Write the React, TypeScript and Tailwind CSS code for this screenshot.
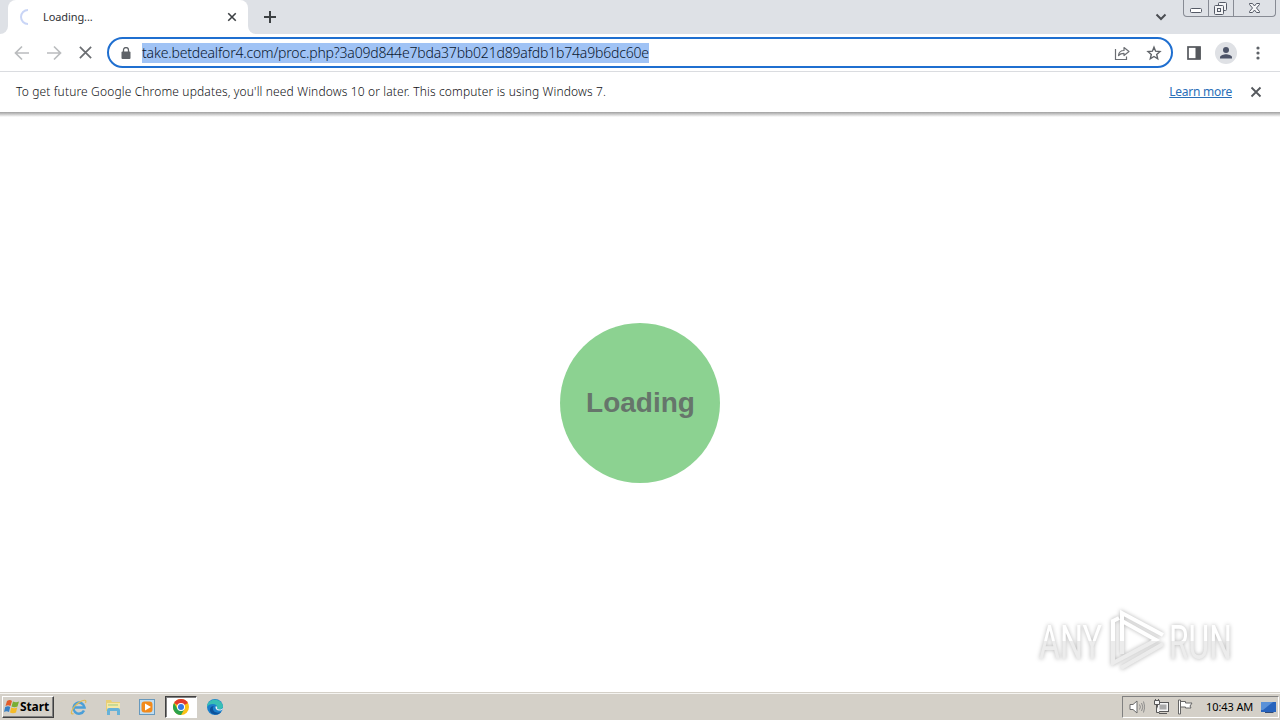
import type { ReactNode } from 'react';

const CloseIcon = ({ className }: { className: string }) => (
  <svg className={className} viewBox="0 0 12 12" fill="none" stroke="currentColor">
    <path d="M1.5 1.5l9 9M10.5 1.5l-9 9" />
  </svg>
);

const WindowButtons = () => (
  <div className="flex w-[93px] h-[17px] border border-t-0 border-[#878b94] rounded-b-[4px] text-[#555a66]">
    <div className="w-[25px] border-r border-[#878b94]">
      <svg className="w-6 h-4" viewBox="0 0 24 16" fill="#fff" stroke="currentColor">
        <rect x="6.5" y="8.5" width="11" height="4" rx="1" />
      </svg>
    </div>
    <div className="w-[25px] border-r border-[#878b94]">
      <svg className="w-6 h-4" viewBox="0 0 24 16" fill="#f3f4f6" stroke="currentColor">
        <rect x="9.5" y="2.5" width="8" height="8" rx="1" />
        <rect x="5.5" y="5.5" width="9" height="9" rx="1" />
        <rect x="8.5" y="8.5" width="3" height="3" />
      </svg>
    </div>
    <svg className="w-[41px] h-4" viewBox="0 0 41 16" fill="#f5f6f8" stroke="currentColor">
      <path d="M15.5 3.5h3l2 2.5 2-2.5h3v1l-3 3.5 3 3.5v1h-3l-2-2.5-2 2.5h-3v-1l3-3.5-3-3.5z" />
    </svg>
  </div>
);

const TabStrip = () => (
  <div className="flex h-[34px] bg-[#dee1e6]">
    <div className="flex items-end w-2">
      <div className="w-2 h-2 bg-white">
        <div className="w-2 h-2 bg-[#dee1e6] rounded-br-lg" />
      </div>
    </div>
    <div className="flex items-center w-60 h-[34px] pl-3 pr-[11px] bg-white rounded-t-lg">
      <svg className="w-4 h-4" viewBox="0 0 16 16" fill="none" stroke="#c9d5f6" strokeWidth="2">
        <path d="M8 1a7 7 0 0 0 0 14" />
      </svg>
      <span className="ml-[7px] text-[11px] leading-4 tracking-[-0.1px] text-[#303236]">Loading...</span>
      <CloseIcon className="w-[10px] h-[10px] ml-auto stroke-[1.9] text-[#3c4043]" />
    </div>
    <div className="flex items-end w-2">
      <div className="w-2 h-2 bg-white">
        <div className="w-2 h-2 bg-[#dee1e6] rounded-bl-lg" />
      </div>
    </div>
    <svg className="w-3 h-3 ml-2 mt-[11px]" viewBox="0 0 12 12" stroke="#3c4043" strokeWidth="2">
      <path d="M6 0v12M0 6h12" />
    </svg>
    <svg className="w-3 h-3 ml-auto mt-[11px] mr-4" viewBox="0 0 12 12" fill="none" stroke="#4a4d52" strokeWidth="2">
      <path d="M1.5 3.5L6 8l4.5-4.5" />
    </svg>
    <WindowButtons />
    <div className="w-1" />
  </div>
);

const Toolbar = () => (
  <div className="flex items-center h-[38px] border-b border-[#dadce0] bg-white">
    <svg className="w-4 h-4 ml-[14px]" viewBox="0 0 16 16" fill="none" stroke="#babcbe" strokeWidth="1.7">
      <path d="M15 8H2M8 1.5L1.5 8 8 14.5" />
    </svg>
    <svg className="w-4 h-4 ml-4" viewBox="0 0 16 16" fill="none" stroke="#babcbe" strokeWidth="1.7">
      <path d="M1 8h13M8 1.5L14.5 8 8 14.5" />
    </svg>
    <CloseIcon className="w-[15px] h-[15px] ml-[16px] stroke-[1.4] text-[#6b6e72]" />
    <div className="flex items-center w-[1066px] h-[31px] ml-[14px] border-2 border-[#1f6fd0] rounded-full bg-white">
      <svg className="w-[10px] h-3 ml-3" viewBox="0 0 10 12">
        <rect x="0.5" y="4.5" width="9" height="7.5" rx="1" fill="#5f6368" />
        <path d="M2.5 5V3a2.5 2.5 0 0 1 5 0v2" fill="none" stroke="#5f6368" strokeWidth="1.3" />
      </svg>
      <span className="w-[507px] h-5 ml-[11px] bg-[#a0c3f5] text-[14px] leading-5 font-light whitespace-nowrap tracking-[-0.18px] text-[#0a1830]">
        take.betdealfor4.com/proc.php?3a09d844e7bda37bb021d89afdb1b74a9b6dc60e
      </span>
      <svg className="w-4 h-4 ml-auto" viewBox="0 0 16 16" fill="none" stroke="#6b6e73" strokeWidth="1.2">
        <path d="M1.5 4v10.5h11v-3" />
        <path d="M4.5 10.5c.4-3.500 2.500-5 5.500-5V2.500l5 4-5 4V8.300c-2.500 0-4 .4-5.500 2.200z" strokeLinejoin="round" />
      </svg>
      <svg className="w-4 h-4 ml-4 mr-[9px]" viewBox="0 0 16 16" fill="none" stroke="#5f6368" strokeWidth="1.4">
        <path d="M8 2.200l1.600 4 4.400.4-3.300 2.900 1 4.300L8 11.500l-3.700 2.300 1-4.300L2 6.600l4.400-.4z" />
      </svg>
    </div>
    <svg className="w-[14px] h-[14px] ml-[14px]" viewBox="0 0 14 14">
      <rect x="1" y="1" width="12" height="12" fill="none" stroke="#55585d" strokeWidth="1.7" />
      <rect x="8.5" y="1" width="5" height="12" fill="#55585d" />
    </svg>
    <svg className="w-[22px] h-[22px] ml-[14px]" viewBox="0 0 22 22" fill="#4d5468">
      <circle cx="11" cy="11" r="11" fill="#dfe1e5" />
      <circle cx="11" cy="8" r="3" />
      <path d="M5 16.5v-1.3c0-2 4-3 6-3s6 1 6 3v1.3z" />
    </svg>
    <svg className="w-1 h-[14px] ml-[19px]" viewBox="0 0 4 14" fill="#5f6368">
      <circle cx="2" cy="2" r="1.6" />
      <circle cx="2" cy="7" r="1.6" />
      <circle cx="2" cy="12" r="1.6" />
    </svg>
  </div>
);

const InfoBar = () => (
  <>
    <div className="flex items-center h-10 pl-4 bg-white text-[12px]">
      <span className="whitespace-nowrap font-light tracking-[0.145px] text-[#101114]">
        To get future Google Chrome updates, you'll need Windows 10 or later. This computer is using Windows 7.
      </span>
      <span className="ml-auto whitespace-nowrap tracking-[-0.25px] underline text-[#2a6fb8]">Learn more</span>
      <CloseIcon className="w-3 h-3 ml-[18px] mr-[18px] stroke-[1.8] text-[#55585d]" />
    </div>
    <div className="h-[5px] bg-linear-to-b from-[#a0a0a0] to-white" />
  </>
);

const Watermark = () => (
  <svg className="w-[210px] h-[76px] mr-[38px] mb-[15px] overflow-visible drop-shadow-[0_0_2px_#b4b4b4]" viewBox="0 0 210 76">
    <defs>
      <linearGradient id="mark" x1="0" y1="0" x2="0" y2="76" gradientUnits="userSpaceOnUse">
        <stop offset="0.52" stopColor="#ffffff" />
        <stop offset="0.53" stopColor="#ececec" />
      </linearGradient>
    </defs>
    <g fill="url(#mark)" fontFamily="Roboto, sans-serif" fontSize="48">
      <text x="7" y="58" textLength="63" lengthAdjust="spacingAndGlyphs">ANY</text>
      <text x="137" y="58" textLength="63" lengthAdjust="spacingAndGlyphs">RUN</text>
    </g>
    <g fill="none" stroke="url(#mark)" strokeWidth="4">
      <path d="M87 17l-6 3v42l43-23-34-19" />
      <path d="M90 45V12l41 22" />
      <path d="M89 67l42-24M90 53v-8" />
    </g>
  </svg>
);

const IeIcon = () => (
  <svg className="w-[18px] h-[18px]" viewBox="0 0 18 18" fill="none">
    <path d="M14 12.5A5.5 5.5 0 1 1 14.5 9.500H5" stroke="#4b9fd8" strokeWidth="2.5" />
    <path d="M3.500 15.500C-1 18 2 9 9 4.500c5-3.200 8-3 6.500.5" stroke="#e0bb55" strokeWidth="1.2" />
  </svg>
);

const FolderIcon = () => (
  <svg className="w-[18px] h-[18px]" viewBox="0 0 18 18">
    <path d="M2 2h5l1 2h8v9H2z" fill="#e9cf75" />
    <path d="M3 5h13v7H3z" fill="#f6e8a6" />
    <path d="M3 17v-5q0-2 2-2h9q2 0 2 2v5h-3v-4H6v4z" fill="#66b2d9" />
    <path d="M4 7h10" stroke="#9acb83" />
  </svg>
);

const PlayerIcon = () => (
  <svg className="w-[18px] h-[18px]" viewBox="0 0 18 18">
    <rect x="1.5" y="1.5" width="15" height="15" fill="#c0ddf1" stroke="#6799bd" />
    <rect x="3.5" y="3.5" width="11" height="11" rx="3" fill="#f28a1b" />
    <path d="M7 5.5l6 3.5-6 3.5z" fill="#fff" />
  </svg>
);

const ChromeIcon = () => (
  <svg className="w-4 h-4" viewBox="0 0 16 16">
    <circle cx="8" cy="8" r="8" fill="#fbc116" />
    <path d="M8 8L1.070 4A8 8 0 0 1 14.930 4z" fill="#e33b2e" />
    <path d="M1.070 4A8 8 0 0 0 8 16l3.500-6L8 8 4.500 10z" fill="#2ba24c" />
    <circle cx="8" cy="8" r="4" fill="#fff" />
    <circle cx="8" cy="8" r="3" fill="#3578e5" />
  </svg>
);

const EdgeIcon = () => (
  <svg className="w-4 h-4" viewBox="0 0 16 16">
    <circle cx="8" cy="8" r="8" fill="#1b7fcb" />
    <path d="M0 8C0-1 14-2 16 7c.3 3-4 4.500-6 3 1-3-1-5-4-5-3 0-5 1-6 3z" fill="#38bfb5" />
    <path d="M6 8c-1 4 3 7 8 5-4 5-12 2-11-3 .4-2 2-3 4-3z" fill="#0d529b" />
    <path d="M9 7c-1.500 2 .5 5 3.500 4.500 2 0 3-.6 3.500-1.500l1-2c-2 3-5 2.800-7 2 .5-1 .5-2-1-3z" fill="#eef4f6" />
  </svg>
);

const TaskButton = ({ active = false, children }: { active?: boolean; children: ReactNode }) => (
  <div
    className={
      active
        ? 'flex items-center justify-center w-8 h-[22px] border border-t-[#404040] border-l-[#404040] border-r-white border-b-white bg-white shadow-[inset_1px_1px_#808080]'
        : 'flex items-center justify-center w-8 h-[22px]'
    }
  >
    {children}
  </div>
);

const Tray = () => (
  <div className="flex items-center w-[157px] h-[22px] ml-auto mt-[2px] mr-[1px] pl-[6px] border border-t-[#808080] border-l-[#808080] border-r-white border-b-white">
    <svg className="w-4 h-4" viewBox="0 0 16 16" fill="#fff" stroke="#6b6b6b">
      <path d="M1 5.5h3L8 2v12l-4-3.5H1z" />
      <path d="M10.500 5.500q1.800 2.500 0 5M12.500 4q2.800 4 0 8M14.500 2.500q2.500 5.500 0 11" fill="none" stroke="#858585" strokeWidth=".9" />
    </svg>
    <svg className="w-4 h-4 ml-2" viewBox="0 0 16 16" fill="#f5f5f5" stroke="#585858">
      <rect x="4.5" y="3.5" width="11" height="9" />
      <rect x="6.5" y="5.5" width="7" height="5" fill="#aaa" stroke="none" />
      <path d="M6 14.5h8M1.500 1.500h5v4h-5zM2.500 0v2M5.500 0v2M3.500 6v7.500h3" />
    </svg>
    <svg className="w-4 h-4 ml-2" viewBox="0 0 16 16" fill="#fff" stroke="#666">
      <path d="M1.500 1v14h2V1zM3.500 2.500h5v1.500h6.500l-2 3 1 2H8.500V8h-5z" />
    </svg>
    <span className="ml-[13px] text-[11px] whitespace-nowrap tracking-[-0.1px] text-black">10:43 AM</span>
    <svg className="w-[15px] h-[13px] ml-auto mr-[2px]" viewBox="0 0 15 13">
      <rect y="1" width="15" height="10" fill="#2864bd" />
      <path d="M0 1h12L2 9H0z" fill="#5a91d8" />
      <path d="M4 11h8l1 1H4z" fill="#344c75" />
    </svg>
  </div>
);

const Taskbar = () => (
  <div className="flex items-center h-7 pl-[2px] pb-px border-t border-[#d4d0c8] bg-[#d4d0c8] shadow-[inset_0_1px_#f5f4f1]">
    <div className="flex items-center w-[52px] h-[22px] mt-[2px] pl-[1px] border border-t-white border-l-white border-r-[#404040] border-b-[#404040] shadow-[inset_-1px_-1px_#808080]">
      <svg className="w-4 h-4" viewBox="0 0 16 16">
        <path d="M3 2q3-2 5 0L6.500 7Q4 5.500 1.500 7z" fill="#e45d29" />
        <path d="M9 2.500q3 1.500 6 0L13.500 7.500q-3 1.500-6 0z" fill="#79ae35" />
        <path d="M1.200 8q3-1.500 5 0L5 13Q2.500 11.500 0 13z" fill="#3980c4" />
        <path d="M7.200 8.500q3 1.500 6 0L12 13.500q-3 1.500-6 0z" fill="#f5bb28" />
      </svg>
      <span className="text-[12px] font-bold tracking-[-0.1px] text-black">Start</span>
    </div>
    <div className="flex gap-[2px] ml-[9px] mt-[2px]">
      <TaskButton><IeIcon /></TaskButton>
      <TaskButton><FolderIcon /></TaskButton>
      <TaskButton><PlayerIcon /></TaskButton>
      <TaskButton active><ChromeIcon /></TaskButton>
      <TaskButton><EdgeIcon /></TaskButton>
    </div>
    <Tray />
  </div>
);

const App = () => (
  <div className="flex flex-col w-[1280px] h-[720px] overflow-hidden bg-white font-['Noto_Sans',sans-serif]">
    <TabStrip />
    <Toolbar />
    <InfoBar />
    <main className="flex-1 flex flex-col items-center">
      <div className="flex items-center justify-center w-40 h-40 mt-[206px] pl-px rounded-full bg-[#8cd291]">
        <span className="font-['Liberation_Sans',sans-serif] text-[28px] leading-8 font-bold text-[#66756b]">Loading</span>
      </div>
      <div className="mt-auto self-end">
        <Watermark />
      </div>
    </main>
    <Taskbar />
  </div>
);

export default App;
